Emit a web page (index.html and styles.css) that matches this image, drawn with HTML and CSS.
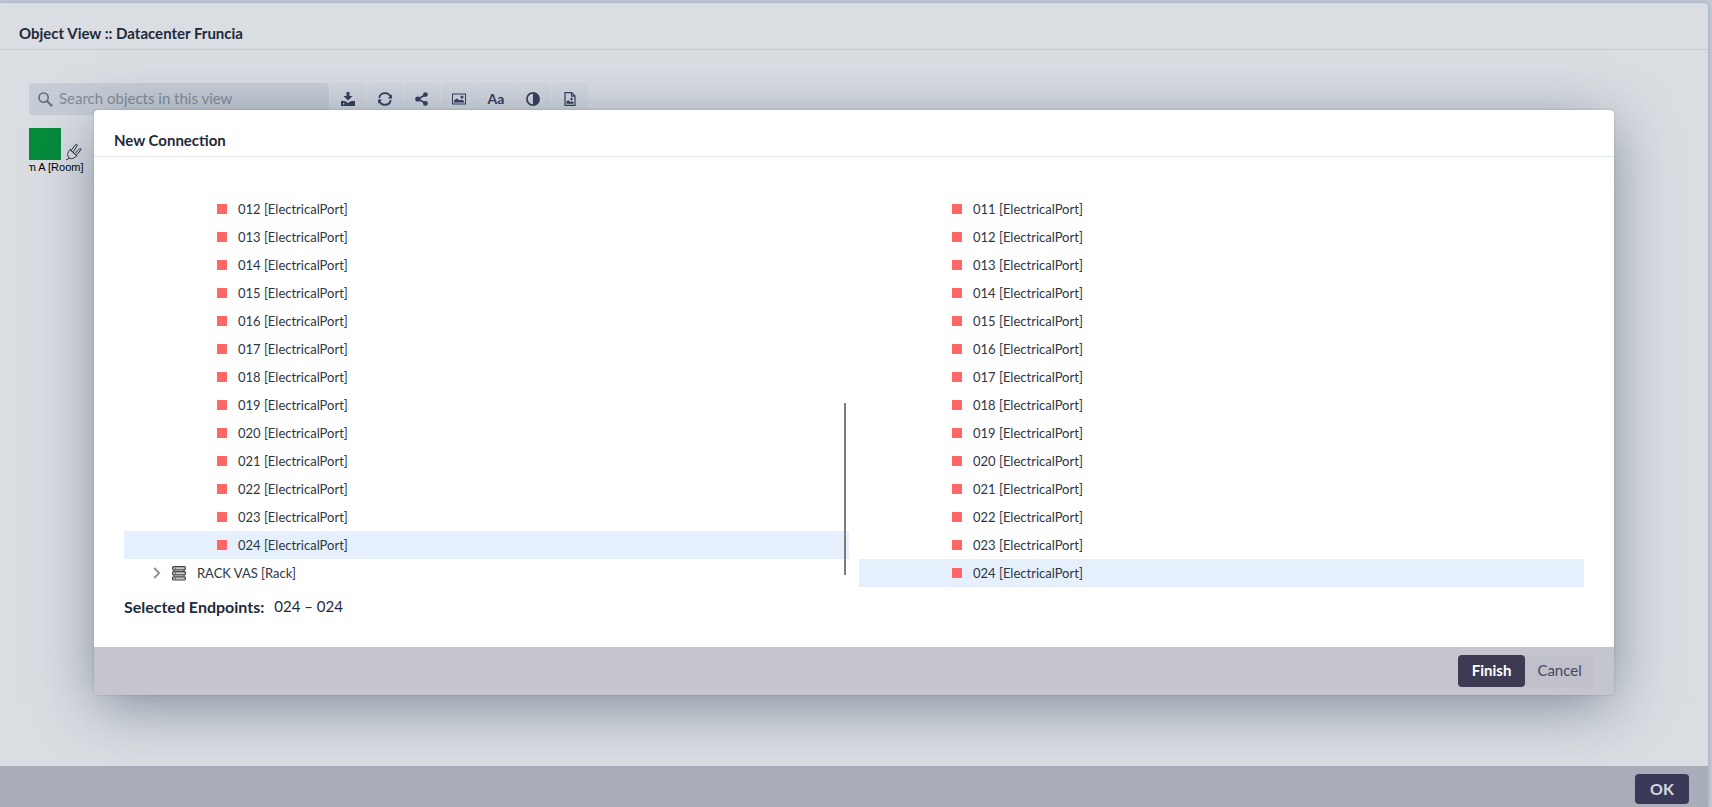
FILE: index.html
```html
<!DOCTYPE html>
<html lang="en">
<head>
<meta charset="utf-8">
<title>Object View</title>
<link rel="stylesheet" href="styles.css">
</head>
<body>
<svg class="defs" aria-hidden="true">
  <symbol id="rack" viewBox="0 0 14 15">
    <g fill="#c9c9c9" stroke="#444" stroke-width="1.2"><rect x=".6" y=".6" width="12.8" height="3.2" rx="1"/><rect x=".6" y="5.6" width="12.8" height="3.2" rx="1"/><rect x=".6" y="10.8" width="12.8" height="3.2" rx="1"/></g>
    <path d="M2 4v1.500M12 4v1.500M2 9v1.500M12 9v1.500" stroke="#444"/><path d="M3 2.200h1M3 7.200h1M3 12.400h1" stroke="#444"/>
  </symbol>
</svg>
<div class="view">
  <header class="view-header"><h1 class="title">Object View :: Datacenter Fruncia</h1></header>
  <main class="view-body">
    <div class="toolbar">
      <label class="search">
        <svg width="15" height="15" viewBox="0 0 15 15" fill="none" stroke="#666e80" stroke-width="1.600"><circle cx="5.600" cy="5.600" r="4.600"/><path d="M9 9l5.200 5.200" stroke-width="2.200"/></svg>
        <input type="text" placeholder="Search objects in this view" aria-label="Search objects in this view">
      </label>
      <button class="tool" aria-label="Download"><svg width="14" height="14" viewBox="0 0 14 14"><path fill-rule="evenodd" d="M5.500 0h3v4h3L7 8.600 2.500 4h3zM0 9h3.800L7 11l3.200-2H14v5H0zM2 11v1.400h1.400V11z"/></svg></button>
      <button class="tool" aria-label="Refresh"><svg width="14" height="14" viewBox="0 0 14 14"><path d="M1.200 6a5.900 5.900 0 0 1 11.600 0M12.800 8a5.900 5.900 0 0 1-11.600 0" fill="none" stroke="#3b3c5c" stroke-width="1.700"/><path d="M14 2.500V6.400h-4.200zM0 11.500V7.600h4.200z"/></svg></button>
      <button class="tool" aria-label="Share"><svg width="14" height="14" viewBox="0 0 14 14"><path d="M10.500 2.700L3 7l7.500 4.300" fill="none" stroke="#3b3c5c" stroke-width="1.700"/><circle cx="10.400" cy="2.600" r="2.400"/><circle cx="2.800" cy="7" r="2.600"/><circle cx="10.400" cy="11.400" r="2.400"/></svg></button>
      <button class="tool" aria-label="Image"><svg width="14" height="14" viewBox="0 0 14 14"><path fill-rule="evenodd" d="M0 1.500h14v11H0zM1 2.500v9h12v-9z"/><path d="M2 10.500V8.600L4.800 6.400 8 8.500l1.500-1L12 9v1.500z"/><circle cx="10" cy="5" r="1.500"/></svg></button>
      <button class="tool tool-text" aria-label="Labels">Aa</button>
      <button class="tool" aria-label="Contrast"><svg width="14" height="14" viewBox="0 0 14 14"><circle cx="7" cy="7" r="6.100" fill="none" stroke="#3b3c5c" stroke-width="1.700"/><path d="M7 1a6 6 0 0 1 0 12z"/></svg></button>
      <button class="tool" aria-label="Export file"><svg width="12" height="14" viewBox="0 0 12 14"><path d="M1 .6h6.600L11 4v9.400H1zM7.500.8v3.400H11" fill="none" stroke="#3b3c5c" stroke-width="1.200"/><path d="M2.500 11.800V9.500l1.800-1.300L6.500 10 8 9.300l1.500 1v1.500z"/><circle cx="7.600" cy="7" r="1.200"/></svg></button>
    </div>
    <div class="graph">
      <div class="node">
        <div class="node-box"></div>
        <span class="node-label">Room A [Room]</span>
      </div>
      <svg class="plug" width="18" height="18" viewBox="0 0 18 18" fill="none" stroke="#222938" stroke-width="1"><path d="M1 16.800q2 .2 3-2M4 14.800C1.800 12 2.600 9 5.200 6.700l6.500 6.100c-2.600 2.800-5.500 3.800-7.700 2zM4.600 6l7.800 7.300M6.600 6.800l4-5.200q1.200-.8 1.800.6L8.600 8.600M10.200 10.300l4.400-4.600q1.600-.6 1.600.8l-4.400 5.300"/></svg>
    </div>
  </main>
  <footer class="view-footer"><button class="btn btn-ok">OK</button></footer>
</div>
<div class="overlay">
  <section class="dialog" role="dialog" aria-labelledby="dlg-title">
    <header class="dialog-header"><h2 class="title" id="dlg-title">New Connection</h2></header>
    <div class="dialog-body">
      <div class="trees">
        <div class="panel">
          <ul class="tree">
            <li class="row">012 [ElectricalPort]</li>
            <li class="row">013 [ElectricalPort]</li>
            <li class="row">014 [ElectricalPort]</li>
            <li class="row">015 [ElectricalPort]</li>
            <li class="row">016 [ElectricalPort]</li>
            <li class="row">017 [ElectricalPort]</li>
            <li class="row">018 [ElectricalPort]</li>
            <li class="row">019 [ElectricalPort]</li>
            <li class="row">020 [ElectricalPort]</li>
            <li class="row">021 [ElectricalPort]</li>
            <li class="row">022 [ElectricalPort]</li>
            <li class="row">023 [ElectricalPort]</li>
            <li class="row selected">024 [ElectricalPort]</li>
            <li class="row branch">
              <svg width="8" height="12" viewBox="0 0 8 12" fill="none" stroke="#8a8f99" stroke-width="1.800"><path d="M1.200 1l5 5-5 5"/></svg>
              <svg width="14" height="15"><use href="#rack"/></svg>
              <span>RACK VAS [Rack]</span>
            </li>
          </ul>
          <div class="scroll-thumb"></div>
        </div>
        <div class="panel">
          <ul class="tree">
            <li class="row">011 [ElectricalPort]</li>
            <li class="row">012 [ElectricalPort]</li>
            <li class="row">013 [ElectricalPort]</li>
            <li class="row">014 [ElectricalPort]</li>
            <li class="row">015 [ElectricalPort]</li>
            <li class="row">016 [ElectricalPort]</li>
            <li class="row">017 [ElectricalPort]</li>
            <li class="row">018 [ElectricalPort]</li>
            <li class="row">019 [ElectricalPort]</li>
            <li class="row">020 [ElectricalPort]</li>
            <li class="row">021 [ElectricalPort]</li>
            <li class="row">022 [ElectricalPort]</li>
            <li class="row">023 [ElectricalPort]</li>
            <li class="row selected">024 [ElectricalPort]</li>
          </ul>
        </div>
      </div>
      <p class="endpoints"><strong>Selected Endpoints:</strong><span class="endpoints-value">024 – 024</span></p>
    </div>
    <footer class="dialog-footer"><button class="btn btn-primary">Finish</button><button class="btn btn-plain">Cancel</button></footer>
  </section>
</div>
</body>
</html>
```
FILE: styles.css
```css
* { box-sizing: border-box; }
body {
  margin: 0;
  min-height: 100vh;
  padding: 3px 4px 0 0;
  display: flex;
  overflow: hidden;
  background: #c5cdd6;
  color: #1f2a3c;
  font-family: Lato, "Open Sans", sans-serif;
  font-size: 16px;
}
button, input { font: inherit; color: inherit; border: 0; padding: 0; }
.defs { display: none; }
.title { margin: 0; font-size: 15px; line-height: 20px; font-weight: 700; }

.view {
  flex: 1;
  display: flex;
  flex-direction: column;
  background: #dadde2;
  border-radius: 0 4px 0 0;
  box-shadow: 0 0 4px 1px #a3afbd;
}
.view-header { height: 47px; padding: 20px 19px 0; border-bottom: 1px solid #c5cbd4; }
.view-body { flex: 1; padding: 33px 29px; }
.view-footer {
  height: 41px;
  padding: 0 19px 3px;
  display: flex;
  align-items: flex-end;
  justify-content: flex-end;
  background: #a9adb9;
}
.toolbar { display: flex; gap: 1px; }
.search {
  width: 300px;
  height: 32px;
  padding: 0 9px;
  display: flex;
  align-items: center;
  gap: 6px;
  background: #c7cdd7;
  border-radius: 4px;
}
.search input { flex: 1; min-width: 0; height: 20px; margin-bottom: 2px; font-size: 15px; background: none; outline: 0; }
.search input::placeholder { color: #848b98; opacity: 1; }
.tool {
  width: 36px;
  height: 32px;
  display: grid;
  place-items: center;
  background: #d3d8e0;
  border-radius: 4px;
  color: #3b3c5c;
  fill: #3b3c5c;
}
.tool-text { font-size: 14px; line-height: 16px; font-weight: 700; }

.graph { margin-top: 13px; display: flex; gap: 4px; overflow: hidden; }
.node { width: 32px; display: flex; flex-direction: column; align-items: center; }
.node-box { width: 32px; height: 32px; background: #068b3b; }
.node-label { font: 11px/15px "Liberation Sans", sans-serif; color: #000; white-space: nowrap; }
.plug { margin-top: 15px; }

.overlay {
  position: absolute;
  inset: 0 4px 2px 0;
  display: flex;
  align-items: center;
  justify-content: center;
}
.dialog {
  width: 89%;
  border-radius: 4px;
  background: #fff;
  box-shadow: 0 0 2px rgba(26, 57, 96, .3), 0 12px 56px -4px rgba(26, 50, 76, .5);
}
.dialog-header { height: 47px; padding: 20px 20px 0; border-bottom: 1px solid #e5e8eb; }
.dialog-body { padding: 38px 30px 20px; }
.trees { display: grid; grid-template-columns: 1fr 1fr; gap: 10px; }
.panel { position: relative; }
.tree { list-style: none; margin: 0; padding: 0; }
.row {
  height: 28px;
  padding-left: 93px;
  display: flex;
  align-items: center;
  gap: 11px;
  font-size: 13px;
  color: #2c3646;
}
.row::before { content: ""; width: 10px; height: 10px; background: #ff6767; }
.selected { background: #e6f0fd; }
.branch { padding-left: 29px; }
.branch::before { display: none; }
.scroll-thumb {
  position: absolute;
  top: 53%;
  bottom: 3%;
  right: 3px;
  width: 2px;
  background: #7c7c7c;
}
.endpoints { margin: 0; height: 40px; padding-bottom: 2px; display: flex; align-items: center; gap: 10px; }
.endpoints-value { font-size: 15px; }
.dialog-footer {
  height: 48px;
  padding: 0 20px;
  display: flex;
  align-items: center;
  justify-content: flex-end;
  background: #c5c5ce;
  border-radius: 0 0 2px 2px;
}
.btn { height: 32px; padding-bottom: 2px; border-radius: 4px; font-size: 15px; }
.btn-primary { width: 67px; background: #3d3a54; color: #fff; font-weight: 700; }
.btn-plain { width: 69px; background: #bfc0ca; color: #45475e; }
.btn-ok { width: 54px; height: 30px; background: #393a57; color: #d5d9e2; font-size: 16px; font-weight: 700; }
```
